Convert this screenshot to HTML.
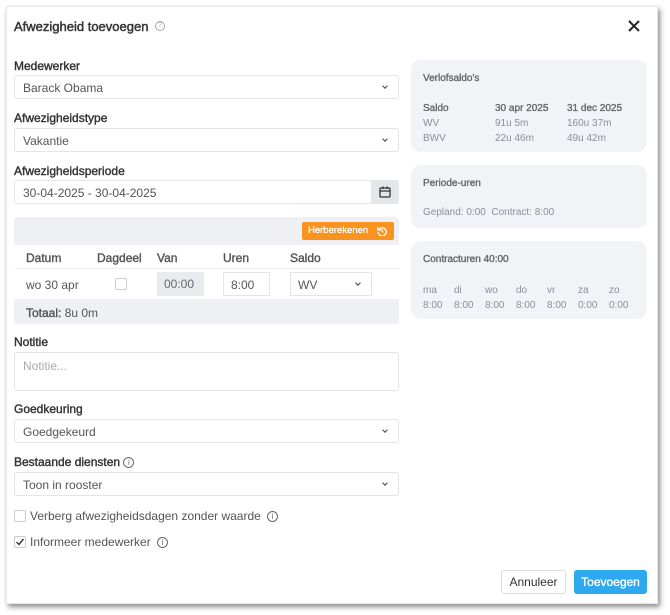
<!DOCTYPE html>
<html><head><style>
*{box-sizing:border-box;margin:0;padding:0}
body{width:670px;height:615px;background:#fff;font-family:"Liberation Sans",sans-serif;color:#333;position:relative;overflow:hidden}
.modal{position:absolute;left:6px;top:6px;width:652px;height:598px;background:#fff;box-shadow:2px 3px 5px rgba(0,0,0,.45);border:1px solid #e8e8e8}
.a{position:absolute}
.sb{font-weight:normal;-webkit-text-stroke:0.4px currentColor}
.lbl{position:absolute;left:14px;font-size:12px;color:#333;-webkit-text-stroke:0.4px #333}
.sel{position:absolute;left:14px;width:385px;height:24px;border:1px solid #e3e5e8;border-radius:3px;font-size:12px;color:#555;padding:5px 8px;background:#fff}
.chev{position:absolute;right:11px;top:8px;width:4px;height:4px;border-right:1.2px solid #444;border-bottom:1.2px solid #444;transform:rotate(45deg)}
.panel{position:absolute;left:411px;width:236px;background:#f1f3f6;border-radius:10px;font-size:10px;color:#8a8f98}
.panel b{color:#666;font-weight:normal;-webkit-text-stroke:0.35px #666}
.th{position:absolute;top:251px;font-size:12px;color:#555;-webkit-text-stroke:0.4px #555}
.info{display:inline-block;width:11px;height:11px;border:1.2px solid #666;border-radius:50%;font-size:8px;text-align:center;line-height:9px;color:#666;vertical-align:middle;-webkit-text-stroke:0}
</style></head><body>
<div class="modal"></div>
<div class="a" style="left:14px;top:19px;font-size:13px;color:#333;-webkit-text-stroke:0.45px #333">Afwezigheid toevoegen</div>
<div class="a" style="left:155px;top:21px;width:10px;height:10px;border:1px solid #aaa;border-radius:50%;font-size:7px;color:#aaa;text-align:center;line-height:8px">?</div>
<svg class="a" style="left:628px;top:20px" width="12" height="12"><path d="M1 1L11 11M11 1L1 11" stroke="#222" stroke-width="2"/></svg>

<div class="lbl" style="top:59px">Medewerker</div>
<div class="sel" style="top:75px">Barack Obama<span class="chev"></span></div>
<div class="lbl" style="top:111px">Afwezigheidstype</div>
<div class="sel" style="top:128px">Vakantie<span class="chev"></span></div>
<div class="lbl" style="top:164px">Afwezigheidsperiode</div>
<div class="sel" style="top:180px">30-04-2025 - 30-04-2025</div>
<div class="a" style="left:371px;top:180px;width:28px;height:24px;background:#e4e6ea;border-radius:0 3px 3px 0"></div>
<svg class="a" style="left:379px;top:186px" width="12" height="12"><rect x="1" y="2" width="10" height="9" rx="1" fill="none" stroke="#333" stroke-width="1.3"/><path d="M1 5H11M4 0.5V3M8 0.5V3" stroke="#333" stroke-width="1.3"/></svg>

<div class="a" style="left:14px;top:217px;width:385px;height:107px;background:#eef0f3;border-radius:3px"></div>
<div class="a" style="left:302px;top:222px;width:92px;height:18px;background:#f7931e;border-radius:2px;color:#fff;font-size:9.5px;padding:3px 0 0 6px;-webkit-text-stroke:0.3px #fff">Herberekenen</div>
<svg class="a" style="left:377px;top:226px" width="10" height="10"><path d="M2 3.5A4 4 0 1 1 1.2 6" fill="none" stroke="#fff" stroke-width="1.3"/><path d="M0.8 1V4H3.8" fill="none" stroke="#fff" stroke-width="1.2"/><path d="M5 3V5.3L6.5 6.3" fill="none" stroke="#fff" stroke-width="1"/></svg>
<div class="a" style="left:14px;top:245px;width:385px;height:54px;background:#fff"></div>
<div class="a" style="left:14px;top:268px;width:385px;height:1px;background:#eceef1"></div>
<div class="th" style="left:26px">Datum</div>
<div class="th" style="left:97px">Dagdeel</div>
<div class="th" style="left:157px">Van</div>
<div class="th" style="left:223px">Uren</div>
<div class="th" style="left:290px">Saldo</div>
<div class="a" style="left:26px;top:278px;font-size:12px;color:#555">wo 30 apr</div>
<div class="a" style="left:115px;top:278px;width:12px;height:12px;border:1px solid #ccc;border-radius:2px"></div>
<div class="a" style="left:157px;top:272px;width:47px;height:24px;background:#e9ebee;font-size:12px;color:#666;padding:5px 0 0 7px">00:00</div>
<div class="a" style="left:223px;top:272px;width:47px;height:24px;border:1px solid #e3e5e8;font-size:12px;color:#555;padding:5px 0 0 7px">8:00</div>
<div class="a" style="left:290px;top:272px;width:82px;height:24px;border:1px solid #e3e5e8;font-size:12px;color:#555;padding:5px 0 0 7px">WV<span class="chev" style="top:8px"></span></div>
<div class="a" style="left:26px;top:306px;font-size:12px;color:#555"><span class="sb">Totaal:</span> 8u 0m</div>

<div class="lbl" style="top:335px">Notitie</div>
<div class="a" style="left:14px;top:352px;width:385px;height:39px;border:1px solid #e3e5e8;border-radius:3px;font-size:12px;color:#aaa;padding:6px 8px">Notitie...</div>
<div class="lbl" style="top:402px">Goedkeuring</div>
<div class="sel" style="top:419px">Goedgekeurd<span class="chev"></span></div>
<div class="lbl" style="top:455px">Bestaande diensten <span class="info">i</span></div>
<div class="sel" style="top:472px">Toon in rooster<span class="chev"></span></div>
<div class="a" style="left:14px;top:510px;width:12px;height:12px;border:1px solid #ccc;border-radius:2px"></div>
<div class="a" style="left:30px;top:509px;font-size:12px;color:#555">Verberg afwezigheidsdagen zonder waarde <span class="info" style="margin-left:3px">i</span></div>
<div class="a" style="left:14px;top:536px;width:12px;height:12px;border:1px solid #ccc;border-radius:2px"></div>
<svg class="a" style="left:15px;top:537px" width="10" height="10"><path d="M1.5 5L4 7.5L8.5 2" fill="none" stroke="#333" stroke-width="1.4"/></svg>
<div class="a" style="left:30px;top:535px;font-size:12px;color:#555">Informeer medewerker <span class="info" style="margin-left:3px">i</span></div>

<div class="a" style="left:501px;top:570px;width:65px;height:24px;border:1px solid #ddd;border-radius:3px;font-size:12px;color:#333;text-align:center;line-height:22px">Annuleer</div>
<div class="a" style="left:574px;top:570px;width:73px;height:24px;background:#2ea8ee;border-radius:3px;font-size:12px;color:#fff;text-align:center;line-height:24px;-webkit-text-stroke:0.35px #fff">Toevoegen</div>

<div class="panel" style="top:60px;height:92px">
<div class="a" style="left:12px;top:13px"><b>Verlofsaldo's</b></div>
<div class="a" style="left:12px;top:41px;line-height:15px"><b>Saldo</b><br>WV<br>BWV</div>
<div class="a" style="left:84px;top:41px;line-height:15px"><b>30 apr 2025</b><br>91u 5m<br>22u 46m</div>
<div class="a" style="left:156px;top:41px;line-height:15px"><b>31 dec 2025</b><br>160u 37m<br>49u 42m</div>
</div>
<div class="panel" style="top:165px;height:63px">
<div class="a" style="left:12px;top:13px"><b>Periode-uren</b></div>
<div class="a" style="left:12px;top:42px">Gepland: 0:00 &nbsp;Contract: 8:00</div>
</div>
<div class="panel" style="top:241px;height:78px">
<div class="a" style="left:12px;top:13px"><b>Contracturen 40:00</b></div>
<div class="a" style="left:12px;top:42px;line-height:15px">ma<br>8:00</div>
<div class="a" style="left:43px;top:42px;line-height:15px">di<br>8:00</div>
<div class="a" style="left:74px;top:42px;line-height:15px">wo<br>8:00</div>
<div class="a" style="left:105px;top:42px;line-height:15px">do<br>8:00</div>
<div class="a" style="left:136px;top:42px;line-height:15px">vr<br>8:00</div>
<div class="a" style="left:167px;top:42px;line-height:15px">za<br>0:00</div>
<div class="a" style="left:198px;top:42px;line-height:15px">zo<br>0:00</div>
</div>
</body></html>
